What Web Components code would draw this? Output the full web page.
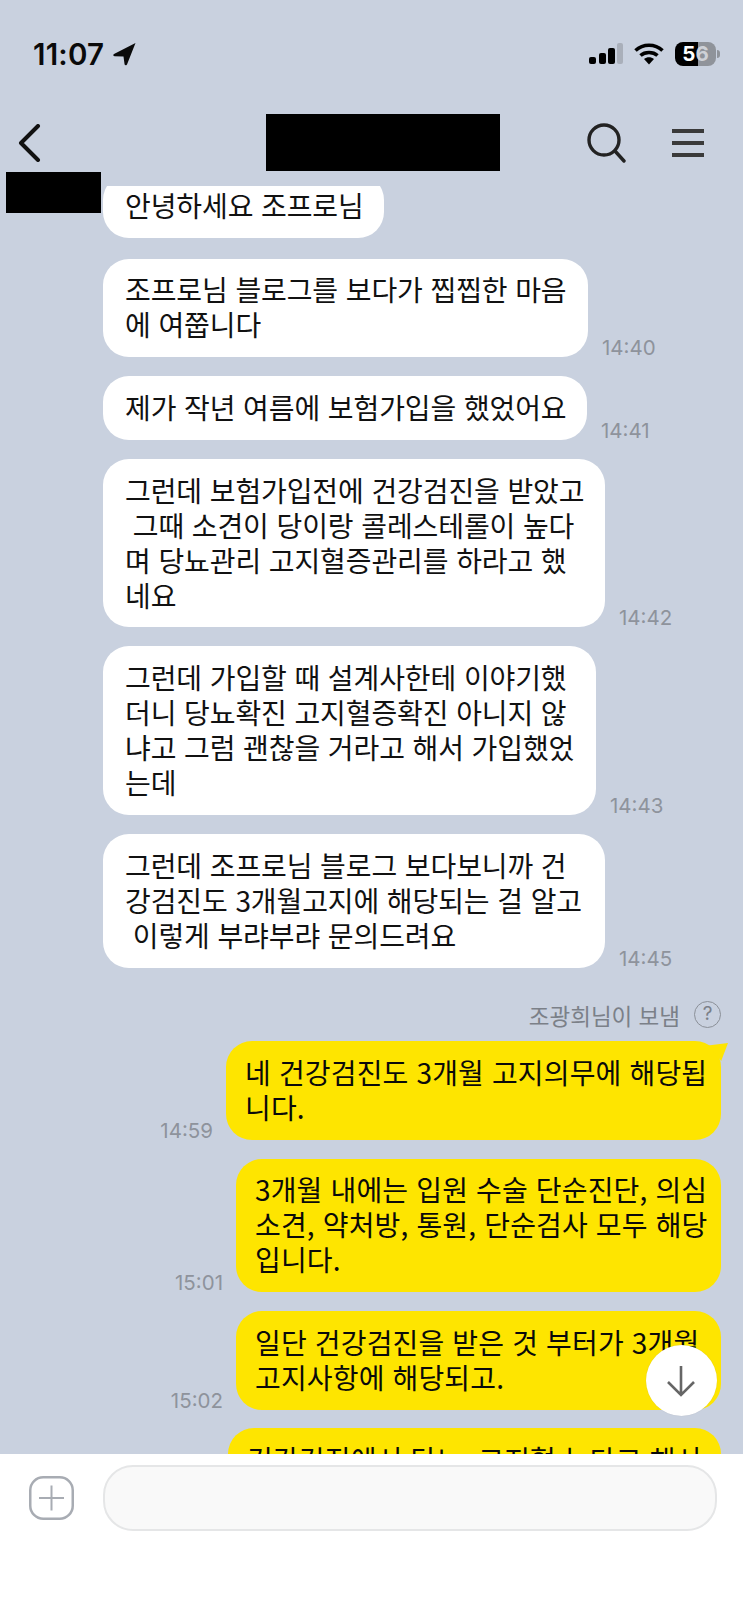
<!DOCTYPE html>
<html lang="ko">

<head>
    <meta charset="UTF-8">
    <title>Chat</title>
    <style>
        html, body { margin: 0; padding: 0; }
        body {
            display: flex;
            flex-direction: column;
            position: relative;
            width: 743px;
            height: 1609px;
            overflow: hidden;
            background: #c9d1df;
            font-family: "Noto Sans CJK KR", "Noto Sans", sans-serif;
        }
    </style>
</head>

<body>

    <template id="status-bar-template">
        <style>
            :host { display: flex; height: 100px; box-sizing: border-box; padding: 34px 23px 0 33px; justify-content: space-between; align-items: flex-start; }
            .left, .right { display: flex; align-items: center; height: 40px; }
            .time { font: 600 29.5px/40px Inter, sans-serif; color: #0a0a0a; letter-spacing: 0.2px; }
            .arrow { margin-left: 8px; }
            .wifi { margin-left: 10px; }
            .battery { display: flex; align-items: center; margin-left: 11px; }
            .cell { width: 41px; height: 24px; border-radius: 8px; background: linear-gradient(90deg, #000 56%, #8f939a 56%); color: #fff; font: 700 20.5px/24px Inter, sans-serif; text-align: center; }
            .cell span { color: #ced1d7; }
            .tip { width: 3px; height: 8px; margin-left: 1px; background: #8f939a; border-radius: 0 3px 3px 0; }
        </style>
        <div class="left">
            <span class="time">11:07</span>
            <svg class="arrow" width="25" height="24" viewBox="0 0 25 24">
                <path d="M23.5 1 L2 12 Q0.2 13.4 2.5 14.2 L11.5 14.6 L12.6 22.6 Q13.6 24 15 22.4 Z" fill="#0a0a0a" />
            </svg>
        </div>
        <div class="right">
            <svg width="35" height="22" viewBox="0 0 35 22">
                <rect x="0" y="14" width="7" height="7" rx="2" fill="#000" />
                <rect x="10" y="10" width="7" height="11" rx="2" fill="#000" />
                <rect x="19" y="5" width="7" height="16" rx="2" fill="#000" />
                <rect x="28" y="0" width="6" height="21" rx="2" fill="#a9afba" />
            </svg>
            <svg class="wifi" width="30" height="22" viewBox="0 0 30 22">
                <path d="M1.5 7.5 C9 0.5 21 0.5 28.5 7.5" fill="none" stroke="#000" stroke-width="3.6" />
                <path d="M6.5 12.5 C11 8.5 19 8.5 23.5 12.5" fill="none" stroke="#000" stroke-width="3.6" />
                <path d="M10 16 C13 13.6 17 13.6 20 16 L15 21.5 Z" fill="#000" />
            </svg>
            <div class="battery">
                <div class="cell">5<span>6</span></div>
                <div class="tip"></div>
            </div>
        </div>
    </template>

    <template id="chat-nav-template">
        <style>
            :host { display: flex; height: 86px; box-sizing: border-box; padding: 0 39px 0 18px; align-items: center; justify-content: space-between; }
            .tools { display: flex; align-items: center; gap: 46px; }
            svg { display: block; }
        </style>
        <svg width="24" height="38" viewBox="0 0 24 38">
            <path d="M20 2 L3 19 L20 36" fill="none" stroke="#111" stroke-width="4" stroke-linecap="round" stroke-linejoin="round" />
        </svg>
        <div class="tools">
            <svg width="39" height="40" viewBox="0 0 39 40">
                <circle cx="17" cy="17" r="15" fill="none" stroke="#222" stroke-width="3.4" />
                <path d="M28 28 L37 38" stroke="#222" stroke-width="3.4" stroke-linecap="round" />
            </svg>
            <svg width="32" height="28" viewBox="0 0 32 28">
                <rect x="0" y="0" width="32" height="4" fill="#3a3a3a" />
                <rect x="0" y="12" width="32" height="4" fill="#3a3a3a" />
                <rect x="0" y="24" width="32" height="4" fill="#3a3a3a" />
            </svg>
        </div>
    </template>

    <template id="chat-list-template">
        <style>
            :host { display: block; flex: 1; min-height: 0; overflow: hidden; background: #c9d1df; }
            .inner { display: flex; flex-direction: column; gap: 19px; margin-top: -12px; }
        </style>
        <div class="inner"><slot></slot></div>
    </template>

    <template id="chat-msg-template">
        <style>
            :host { display: flex; align-items: flex-end; }
            :host([from="them"]) { padding-left: 103px; flex-direction: row; gap: 14px; }
            :host([from="me"]) { padding-right: 22px; flex-direction: row-reverse; gap: 13px; }
            .bubble {
                position: relative;
                box-sizing: border-box;
                padding: 13.8px 0 14.8px 22px;
                border-radius: 26px;
                background: #fff;
                color: #111;
                font-size: 28px;
                line-height: 35px;
                letter-spacing: -0.1px;
                white-space: pre;
            }
            :host([from="me"]) .bubble { background: #fee500; color: #0a0a0a; padding-left: 19px; letter-spacing: 0.15px; }
            :host([tail]) .bubble::after {
                content: "";
                position: absolute;
                top: 2px;
                right: -7px;
                width: 20px;
                height: 18px;
                background: #fee500;
                clip-path: polygon(0 14%, 100% 0, 66% 100%);
            }
            .time { font: 400 20.5px/20px Inter, sans-serif; color: #8e939c; margin-bottom: -1px; }
        </style>
        <div class="bubble"><slot></slot></div>
        <span class="time"></span>
    </template>

    <template id="sender-note-template">
        <style>
            :host { display: flex; justify-content: flex-end; align-items: center; gap: 14px; padding-right: 22px; height: 27px; margin-top: 14.5px; margin-bottom: -6px; font-size: 22.5px; color: #7b8088; }
            .help { width: 27px; height: 27px; box-sizing: border-box; border: 1.6px solid #8b9098; border-radius: 50%; font: 400 19px/24px Inter, sans-serif; text-align: center; }
        </style>
        <slot></slot>
        <span class="help">?</span>
    </template>

    <template id="chat-footer-template">
        <style>
            :host { display: flex; align-items: flex-start; gap: 29px; height: 155px; box-sizing: border-box; padding: 11px 26px 0 29px; background: #fff; }
            .plus { width: 45px; height: 44px; margin-top: 11px; flex: none; }
            .field { flex: 1; height: 66px; box-sizing: border-box; border: 2px solid #e5e6e7; border-radius: 30px; background: #f9f9f9; }
        </style>
        <svg class="plus" viewBox="0 0 45 44">
            <rect x="1.25" y="1.25" width="42.5" height="41.5" rx="13" fill="none" stroke="#a8acb3" stroke-width="2.5" />
            <path d="M10 22 H35 M22.5 9.5 V34.5" stroke="#a8acb3" stroke-width="2" />
        </svg>
        <div class="field"></div>
    </template>

    <template id="scroll-down-template">
        <style>
            :host { position: absolute; left: 646px; top: 1345px; width: 71px; height: 71px; border-radius: 50%; background: #fff; box-shadow: 0 0 1px rgba(0, 0, 0, .15); display: flex; align-items: center; justify-content: center; }
            svg { margin-left: -2px; }
        </style>
        <svg width="30" height="32" viewBox="0 0 30 32">
            <path d="M15 1 V30 M2 17 L15 30 L28 17" fill="none" stroke="#666" stroke-width="2.6" />
        </svg>
    </template>

    <template id="black-out-template">
        <style>
            :host { position: absolute; display: block; background: #000; }
        </style>
    </template>

    <status-bar></status-bar>
    <chat-nav></chat-nav>
    <chat-list>
        <chat-msg from="them" width="281">안녕하세요 조프로님</chat-msg>
        <chat-msg from="them" width="485" time="14:40" style="margin-top:2px">조프로님 블로그를 보다가 찝찝한 마음<br>에 여쭙니다</chat-msg>
        <chat-msg from="them" width="484" time="14:41">제가 작년 여름에 보험가입을 했었어요</chat-msg>
        <chat-msg from="them" width="502" time="14:42">그런데 보험가입전에 건강검진을 받았고<br> 그때 소견이 당이랑 콜레스테롤이 높다<br>며 당뇨관리 고지혈증관리를 하라고 했<br>네요</chat-msg>
        <chat-msg from="them" width="493" time="14:43">그런데 가입할 때 설계사한테 이야기했<br>더니 당뇨확진 고지혈증확진 아니지 않<br>냐고 그럼 괜찮을 거라고 해서 가입했었<br>는데</chat-msg>
        <chat-msg from="them" width="502" time="14:45">그런데 조프로님 블로그 보다보니까 건<br>강검진도 3개월고지에 해당되는 걸 알고<br> 이렇게 부랴부랴 문의드려요</chat-msg>
        <sender-note>조광희님이 보냄</sender-note>
        <chat-msg from="me" tail width="495" time="14:59">네 건강검진도 3개월 고지의무에 해당됩<br>니다.</chat-msg>
        <chat-msg from="me" width="485" time="15:01">3개월 내에는 입원 수술 단순진단, 의심<br>소견, 약처방, 통원, 단순검사 모두 해당<br>입니다.</chat-msg>
        <chat-msg from="me" width="485" time="15:02">일단 건강검진을 받은 것 부터가 3개월<br>고지사항에 해당되고.</chat-msg>
        <chat-msg from="me" width="493" style="margin-top:-1px">건강검진에서 당뇨, 고지혈 높다고 해서</chat-msg>
    </chat-list>
    <chat-footer></chat-footer>
    <scroll-down></scroll-down>
    <black-out style="left:266px;top:114px;width:234px;height:57px"></black-out>
    <black-out style="left:6px;top:172px;width:95px;height:41px"></black-out>

    <script>
        // all the plain ones just clone their template
        function plain(name) {
            customElements.define(name, class extends HTMLElement {
                constructor() {
                    super();
                    const tpl = document.getElementById(name + '-template');
                    this.attachShadow({ mode: 'open' }).appendChild(tpl.content.cloneNode(true));
                }
            });
        }
        ['status-bar', 'chat-nav', 'chat-list', 'sender-note', 'chat-footer', 'scroll-down', 'black-out'].forEach(plain);

        class ChatMsg extends HTMLElement {
            constructor() {
                super();
                const tpl = document.getElementById('chat-msg-template');
                this.attachShadow({ mode: 'open' }).appendChild(tpl.content.cloneNode(true));
            }

            connectedCallback() {
                const root = this.shadowRoot;
                root.querySelector('.bubble').style.width = this.getAttribute('width') + 'px';
                root.querySelector('.time').textContent = this.getAttribute('time') || '';
            }
        }
        customElements.define('chat-msg', ChatMsg);
    </script>
</body>

</html>
